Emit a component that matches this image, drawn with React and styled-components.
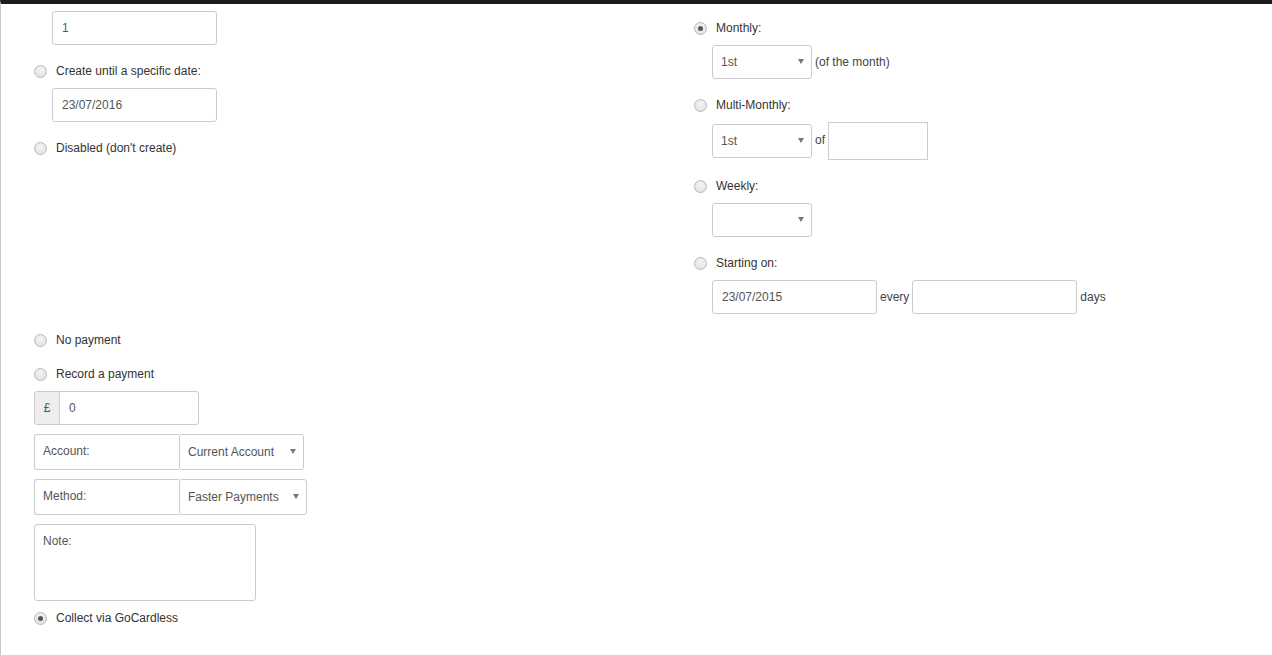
import React from 'react';
import styled, { createGlobalStyle } from 'styled-components';

const GlobalStyle = createGlobalStyle`
  html, body {
    margin: 0;
    padding: 0;
    background: #fff;
  }
  body {
    font-family: 'Liberation Sans', Arial, sans-serif;
    font-size: 12px;
    color: #333;
  }
`;

const Page = styled.div`
  min-height: 651px;
  border-top: 4px solid #1c1c1c;
  border-left: 1px solid #c8c8c8;
  padding-left: 33px;
`;

const Top = styled.div`
  display: flex;
`;

const Column = styled.div`
  display: flex;
  flex-direction: column;
  width: ${(p) => p.width || 'auto'};
  padding-top: ${(p) => p.top || 0}px;
`;

const Section = styled.div`
  display: flex;
  flex-direction: column;
  padding-top: 16px;
`;

const OptionRow = styled.label`
  box-sizing: border-box;
  display: flex;
  align-items: center;
  gap: 9px;
  height: 18px;
  padding-top: 2px;
  line-height: 16px;
  margin-top: ${(p) => (p.first ? 0 : p.tight ? 7 : 16)}px;
  color: #333;
`;

const Radio = styled.span`
  box-sizing: border-box;
  width: 13px;
  height: 13px;
  border-radius: 50%;
  border: 1px solid #b9b9b9;
  background: radial-gradient(circle at 50% 35%, #f4f4f4 0%, #dedede 100%);
  display: flex;
  align-items: center;
  justify-content: center;
  &::after {
    content: '';
    width: 5px;
    height: 5px;
    border-radius: 50%;
    background: #555;
    display: ${(p) => (p.checked ? 'block' : 'none')};
  }
`;

const Sub = styled.div`
  display: flex;
  align-items: center;
  margin-top: ${(p) => (p.first ? 0 : 9)}px;
  padding-left: ${(p) => (p.indent ? 18 : 0)}px;
`;

const Input = styled.div`
  box-sizing: border-box;
  width: ${(p) => p.w || 165}px;
  height: ${(p) => p.h || 34}px;
  border: 1px solid #ccc;
  border-radius: ${(p) => (p.square ? 0 : 3)}px;
  padding: 0 9px;
  display: flex;
  align-items: center;
  color: #555;
  background: #fff;
`;

// select box with the small grey caret pinned to the right
const Select = styled(Input)`
  padding: 0 7px 0 8px;
  &::after {
    content: '';
    margin-left: auto;
    border-left: 3px solid transparent;
    border-right: 3px solid transparent;
    border-top: 5px solid #777;
    margin-top: -2px;
  }
`;

const Aside = styled.span`
  color: #444;
  padding: 0 3px;
  margin-top: ${(p) => p.up || 0}px;
`;

const Group = styled.div`
  box-sizing: border-box;
  display: flex;
  width: 165px;
  height: 34px;
  border: 1px solid #ccc;
  border-radius: 3px;
  overflow: hidden;
`;

const Addon = styled.span`
  width: 24px;
  background: #eee;
  border-right: 1px solid #ccc;
  display: flex;
  align-items: center;
  justify-content: center;
  color: #555;
`;

const GroupValue = styled.span`
  flex: 1;
  display: flex;
  align-items: center;
  padding-left: 9px;
  color: #555;
`;

const Field = styled.div`
  display: flex;
  margin-top: 9px;
`;

const FieldLabel = styled.div`
  box-sizing: border-box;
  width: 145px;
  height: 36px;
  border: 1px solid #ccc;
  border-right: none;
  border-radius: 3px 0 0 3px;
  padding: 9px 0 0 8px;
  color: #555;
`;

const Note = styled.div`
  box-sizing: border-box;
  width: 222px;
  height: 77px;
  margin-top: 9px;
  border: 1px solid #ccc;
  border-radius: 3px;
  padding: 9px 8px;
  color: #555;
`;

const Option = ({ checked, first, tight, children }) => (
  <OptionRow first={first} tight={tight}>
    <Radio checked={checked} />
    {children}
  </OptionRow>
);

const App = () => (
  <>
    <GlobalStyle />
    <Page>
      <Top>
        <Column width="660px" top={7}>
          <Sub indent first>
            <Input>1</Input>
          </Sub>
          <Option>Create until a specific date:</Option>
          <Sub indent>
            <Input>23/07/2016</Input>
          </Sub>
          <Option>Disabled (don't create)</Option>
        </Column>
        <Column top={14}>
          <Option checked first>Monthly:</Option>
          <Sub indent>
            <Select w={100}>1st</Select>
            <Aside>(of the month)</Aside>
          </Sub>
          <Option>Multi-Monthly:</Option>
          <Sub indent>
            <Select w={100}>1st</Select>
            <Aside up={-3}>of</Aside>
            <Input w={100} h={38} square />
          </Sub>
          <Option>Weekly:</Option>
          <Sub indent>
            <Select w={100} />
          </Sub>
          <Option>Starting on:</Option>
          <Sub indent>
            <Input>23/07/2015</Input>
            <Aside>every</Aside>
            <Input />
            <Aside>days</Aside>
          </Sub>
        </Column>
      </Top>
      <Section>
        <Option first>No payment</Option>
        <Option>Record a payment</Option>
        <Field>
          <Group>
            <Addon>£</Addon>
            <GroupValue>0</GroupValue>
          </Group>
        </Field>
        <Field>
          <FieldLabel>Account:</FieldLabel>
          <Select w={125} h={36}>Current Account</Select>
        </Field>
        <Field>
          <FieldLabel>Method:</FieldLabel>
          <Select w={128} h={36}>Faster Payments</Select>
        </Field>
        <Note>Note:</Note>
        <Option checked tight>Collect via GoCardless</Option>
      </Section>
    </Page>
  </>
);

export default App;
